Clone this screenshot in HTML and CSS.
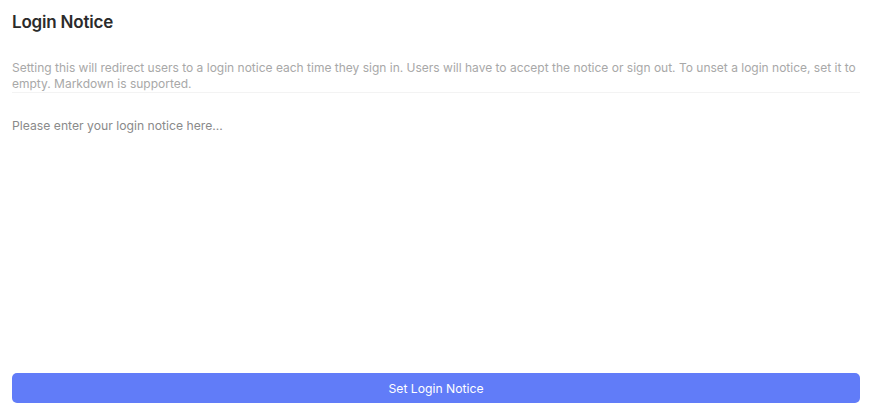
FILE: index.html
```html
<!DOCTYPE html>
<html>
<head>
<meta charset="utf-8">
<link rel="stylesheet" href="styles.css">
</head>
<body>
<div class="page">
  <h1 class="title">Login Notice</h1>
  <p class="desc">Setting this will redirect users to a login notice each time they sign in. Users will have to accept the notice or sign out. To unset a login notice, set it to empty. Markdown is supported.</p>
  <textarea class="editor" placeholder="Please enter your login notice here..." autofocus></textarea>
  <button class="submit">Set Login Notice</button>
</div>
</body>
</html>
```
FILE: styles.css
```css
html, body {
  margin: 0;
  padding: 0;
  background: #fff;
  font-family: Inter, "Noto Sans", sans-serif;
}
.page {
  box-sizing: border-box;
  height: 417px;
  padding: 10px 20px 14px 12px;
  display: flex;
  flex-direction: column;
}
.title {
  margin: 0;
  font-size: 17px;
  line-height: 24px;
  font-weight: 600;
  color: #2b2b2b;
  letter-spacing: -0.2px;
}
.desc {
  margin: 26px 0 0 0;
  padding-bottom: 0;
  font-size: 12px;
  line-height: 16px;
  color: #a8a8a8;
  border-bottom: 1px solid #f3f3f3;
}
.editor {
  flex: 1;
  margin: 24px 0 12px 0;
  padding: 0;
  border: none;
  outline: none;
  resize: none;
  font-family: inherit;
  font-size: 12.2px;
  line-height: 18px;
  color: #333;
  caret-color: #333;
  background: transparent;
}
.editor::placeholder {
  color: #8a8a8a;
}
.submit {
  height: 30px;
  border: none;
  border-radius: 5px;
  background: #617cf8;
  color: #fff;
  font-family: inherit;
  font-size: 12.2px;
  cursor: pointer;
}
```
